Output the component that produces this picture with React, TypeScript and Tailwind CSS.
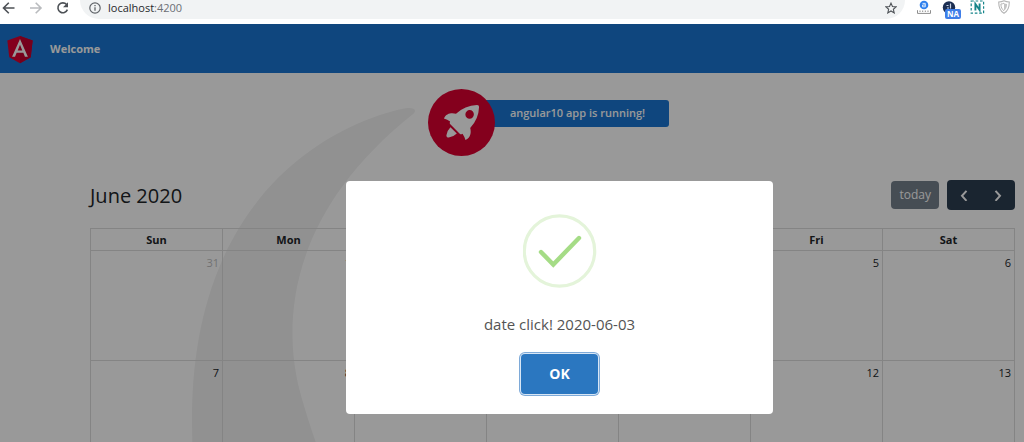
import React from "react";

const days = ["Sun", "Mon", "Tue", "Wed", "Thu", "Fri", "Sat"];
const weeks = [
  [31, 1, 2, 3, 4, 5, 6],
  [7, 8, 9, 10, 11, 12, 13],
];

function BrowserBar() {
  return (
    <div className="flex h-6 shrink-0 items-start bg-white">
      <nav aria-label="Browser" className="flex h-4 items-center gap-[13px] pl-0.5">
        <button aria-label="Back" className="text-[#4d5156]">
          <svg className="size-[14px]" viewBox="0 0 14 14" fill="none" stroke="currentColor" strokeWidth="1.6">
            <path d="M12.5 7H1.5M6.8 1.8 1.5 7l5.3 5.2" />
          </svg>
        </button>
        <button aria-label="Forward" className="text-[#b9bbbe]">
          <svg className="size-[14px]" viewBox="0 0 14 14" fill="none" stroke="currentColor" strokeWidth="1.6">
            <path d="M1 7h11M6.7 1.8 12 7l-5.3 5.2" />
          </svg>
        </button>
        <button aria-label="Reload" className="text-[#4d5156]">
          <svg className="size-[14px]" viewBox="0 0 14 14" fill="none" stroke="currentColor" strokeWidth="1.6">
            <path d="M10.6 3.6A4.900 4.900 0 1 0 11.400 8.600" />
            <path d="M12 1.200v5H7z" fill="currentColor" stroke="none" />
          </svg>
        </button>
      </nav>
      <div className="ml-2.5 flex h-[19px] min-w-0 flex-1 items-start rounded-b-full bg-[#f1f3f4] pr-2 pl-[9px]">
        <svg className="mt-0.5 size-3 shrink-0" viewBox="0 0 12 12" fill="none" stroke="#5f6368">
          <circle cx="6" cy="6" r="5.2" strokeWidth="1.2" />
          <path d="M6 5.2v3.6M6 3v1.3" strokeWidth="1.3" />
        </svg>
        <span className="ml-[7px] flex-1 text-[11px] leading-4 text-[#6b6f74]">
          <span className="text-[#26282b]">localhost</span>:4200
        </span>
        <button aria-label="Bookmark" className="mt-0.5">
          <svg className="size-3" viewBox="0 0 24 24" fill="none" stroke="#4d5156" strokeWidth="2.2">
            <path d="m12 2.3 2.9 6.8 7.4.6-5.6 4.9 1.7 7.2-6.4-3.9-6.4 3.9 1.7-7.2-5.6-4.9 7.4-.6z" />
          </svg>
        </button>
      </div>
      <div className="flex items-start gap-[10px] pr-3 pl-[11px]">
        <svg className="h-4 w-4" viewBox="0 0 16 16">
          <circle cx="8" cy="5" r="4.300" fill="#2f80ed" />
          <path d="M6.500 3.400h2.800v3.400H6.500V5h2.800" fill="none" stroke="#d5e6fc" strokeWidth="1" />
          <path d="M1.500 10.200v3.200h13v-3.200M4 12v-1.500M6.700 12v-1.500M9.300 12v-1.500M12 12v-1.500" fill="none" stroke="#8d8d8d" strokeWidth="1" />
        </svg>
        <div className="relative h-5 w-[18px]">
          <svg className="size-[14px]" viewBox="0 0 14 14">
            <circle cx="7" cy="7.500" r="6.200" fill="#1c2e52" />
            <path d="M4.500 5.500h2M8.500 3.500v5M5 8h2" stroke="#c9d3e6" strokeWidth="1.2" />
          </svg>
          <span className="absolute top-[9px] left-[3px] rounded-xs bg-[#3f7ee8] px-0.5 text-[8px] leading-[10px] font-bold text-white">
            NA
          </span>
        </div>
        <svg className="h-[14px] w-4" viewBox="0 0 16 14" fill="none" stroke="#16858a">
          <rect x="1.200" y="1" width="12.400" height="12.200" strokeWidth="1.200" strokeDasharray="2.600 1.800" />
          <path d="M5.400 10.600V4l4.200 6V3.400" strokeWidth="1.900" />
        </svg>
        <svg className="h-[14px] w-4" viewBox="0 0 16 14" fill="none" stroke="#b5b5b5">
          <path d="M8 .8c1.800.9 3.400 1.200 5.300 1.200C13.300 7.500 12 11 8 13.300 4 11 2.700 7.500 2.700 2 4.600 2 6.200 1.700 8 .8z" strokeWidth="1.1" />
          <path d="M8 3.200c1 .5 2 .7 3.100.8-.1 3.300-1 5.300-3.100 6.800z" fill="#c4c4c4" stroke="none" />
          <path d="M8 3.200c-1 .5-2 .7-3.100.8.1 3.300 1 5.300 3.100 6.800" />
        </svg>
      </div>
    </div>
  );
}

function AngularLogo() {
  return (
    <svg className="size-[34px]" viewBox="0 0 250 250" role="img" aria-label="Angular">
      <path fill="#dd0031" d="M125 30 31.900 63.200l14.200 123.100L125 230l78.900-43.700 14.200-123.100z" />
      <path fill="#c3002f" d="M125 30v200l78.900-43.700 14.200-123.100z" />
      <path
        fill="#fff"
        d="M125 52.100 66.800 182.600h21.700l11.700-29.200h49.400l11.700 29.200H183L125 52.100zm17 83.300h-34l17-40.900z"
      />
    </svg>
  );
}

function Rocket() {
  return (
    <svg className="relative z-10 size-[67px]" viewBox="0 0 101.678 101.678" aria-hidden="true">
      <circle cx="50.839" cy="50.839" r="50.839" fill="#dd0031" />
      <g fill="#fff" transform="translate(24.185 24.185)">
        <path
          transform="translate(0.371 3.363)"
          d="M3.4,42.615a3.084,3.084,0,0,0,3.553,3.553,21.419,21.419,0,0,0,12.215-6.107L9.511,30.4A21.419,21.419,0,0,0,3.4,42.615Z"
        />
        <path d="M53.3,3.221A3.09,3.09,0,0,0,50.081,0,48.227,48.227,0,0,0,18.322,13.437c-6-1.666-14.991-1.221-18.322,7.218A33.892,33.892,0,0,1,9.439,25.1l-.333.666a3.013,3.013,0,0,0,.555,3.553L23.985,43.641a2.9,2.9,0,0,0,3.553.555l.666-.333A33.892,33.892,0,0,1,32.647,53.3c8.55-3.664,8.884-12.326,7.218-18.322A48.227,48.227,0,0,0,53.3,3.221ZM34.424,9.772a6.439,6.439,0,1,1,9.106,9.106,6.368,6.368,0,0,1-9.106,0A6.467,6.467,0,0,1,34.424,9.772Z" />
      </g>
    </svg>
  );
}

function Smoke() {
  return (
    <svg className="absolute top-[35px] left-[192px] w-[223px]" viewBox="0 0 516.119 1083.632" aria-hidden="true">
      <path
        fill="#f2f2f2"
        transform="translate(-147.02 -140.939)"
        d="M644.6,141S143.02,215.537,147.049,870.207s342.774,201.755,342.774,201.755S404.659,847.213,388.815,762.2c-27.116-145.51-11.551-384.124,271.9-609.1C671.15,139.365,644.6,141,644.6,141Z"
      />
    </svg>
  );
}

function Calendar() {
  return (
    <section className="relative mt-6 mr-[9px] ml-[90px]">
      <div className="flex h-[30px] items-center justify-between">
        <h2 className="pt-0.5 text-xl leading-7 text-[#212529]">June 2020</h2>
        <div className="flex items-center gap-2">
          <button className="h-7 rounded-sm bg-[#2c3e50] px-2 text-xs text-white opacity-65">today</button>
          <div className="flex h-[30px] rounded-sm bg-[#2c3e50] text-white">
            <button aria-label="Previous month" className="grid w-[34px] place-items-center">
              <svg className="size-3" viewBox="0 0 12 12" fill="none" stroke="currentColor" strokeWidth="2">
                <path d="M8.500 1.800 4 6.800l4.500 5" />
              </svg>
            </button>
            <button aria-label="Next month" className="grid w-[34px] place-items-center">
              <svg className="size-3" viewBox="0 0 12 12" fill="none" stroke="currentColor" strokeWidth="2">
                <path d="M3.500 1.800 8 6.800l-4.500 5" />
              </svg>
            </button>
          </div>
        </div>
      </div>
      <table className="mt-[18px] w-full table-fixed border-collapse text-xs text-[#212529]">
        <thead>
          <tr className="h-[22px]">
            {days.map((day) => (
              <th key={day} className="border border-[#dddddd] p-0 text-[11px] leading-4 font-bold">
                {day}
              </th>
            ))}
          </tr>
        </thead>
        <tbody>
          {weeks.map((week) => (
            <tr key={week[0]} className="h-[110px]">
              {week.map((date) => (
                <td
                  key={date}
                  className="border border-[#dddddd] px-[3px] py-1 text-right align-top text-[11px] leading-4"
                >
                  <span className={date === 31 ? "opacity-30" : ""}>{date}</span>
                </td>
              ))}
            </tr>
          ))}
        </tbody>
      </table>
    </section>
  );
}

function ClickDialog() {
  return (
    <div className="absolute inset-0 z-20 flex items-start justify-center bg-black/40 pt-[157px] pl-[95px]">
      <div
        role="dialog"
        aria-modal="true"
        aria-labelledby="click-message"
        className="flex w-[427px] flex-col items-center rounded-[4px] bg-white pt-[33px] pb-5"
      >
        <svg className="size-[74px]" viewBox="0 0 74 74" fill="none" aria-hidden="true">
          <circle cx="36.500" cy="37" r="35.200" stroke="#e4f4da" strokeWidth="3.200" />
          <path d="m18 38 12.300 12.500 25.700-26.500" stroke="#a5dc86" strokeWidth="4.400" strokeLinecap="round" />
        </svg>
        <p id="click-message" className="mt-6 text-[15px] leading-6 text-[#545454]">
          date click! 2020-06-03
        </p>
        <button className="mt-[18px] h-10 w-[77px] rounded-[4px] bg-[#2b77c0] text-sm font-bold text-white ring-1 ring-[#7eaad8] ring-offset-1 ring-offset-[#d8e6f5]">
          OK
        </button>
      </div>
    </div>
  );
}

export default function App() {
  return (
    <div className="flex h-screen flex-col overflow-hidden font-['Open_Sans','Noto_Sans',sans-serif]">
      <BrowserBar />
      <div className="relative min-h-0 flex-1 overflow-hidden bg-white">
        <header className="flex h-[49px] items-center bg-[#1976d2] pl-[3px] text-white">
          <AngularLogo />
          <span className="ml-[13px] pt-px text-[11px] font-bold">Welcome</span>
        </header>
        <main className="relative pt-4">
          <Smoke />
          <div className="flex h-[67px] items-center justify-center pl-[73px]">
            <Rocket />
            <div className="-mt-[18px] -ml-[33px] flex h-[27px] items-center rounded-[3px] bg-[#1976d2] pr-6 pl-12 text-[11px] font-semibold text-white">
              angular10 app is running!
            </div>
          </div>
          <Calendar />
        </main>
        <ClickDialog />
      </div>
    </div>
  );
}
